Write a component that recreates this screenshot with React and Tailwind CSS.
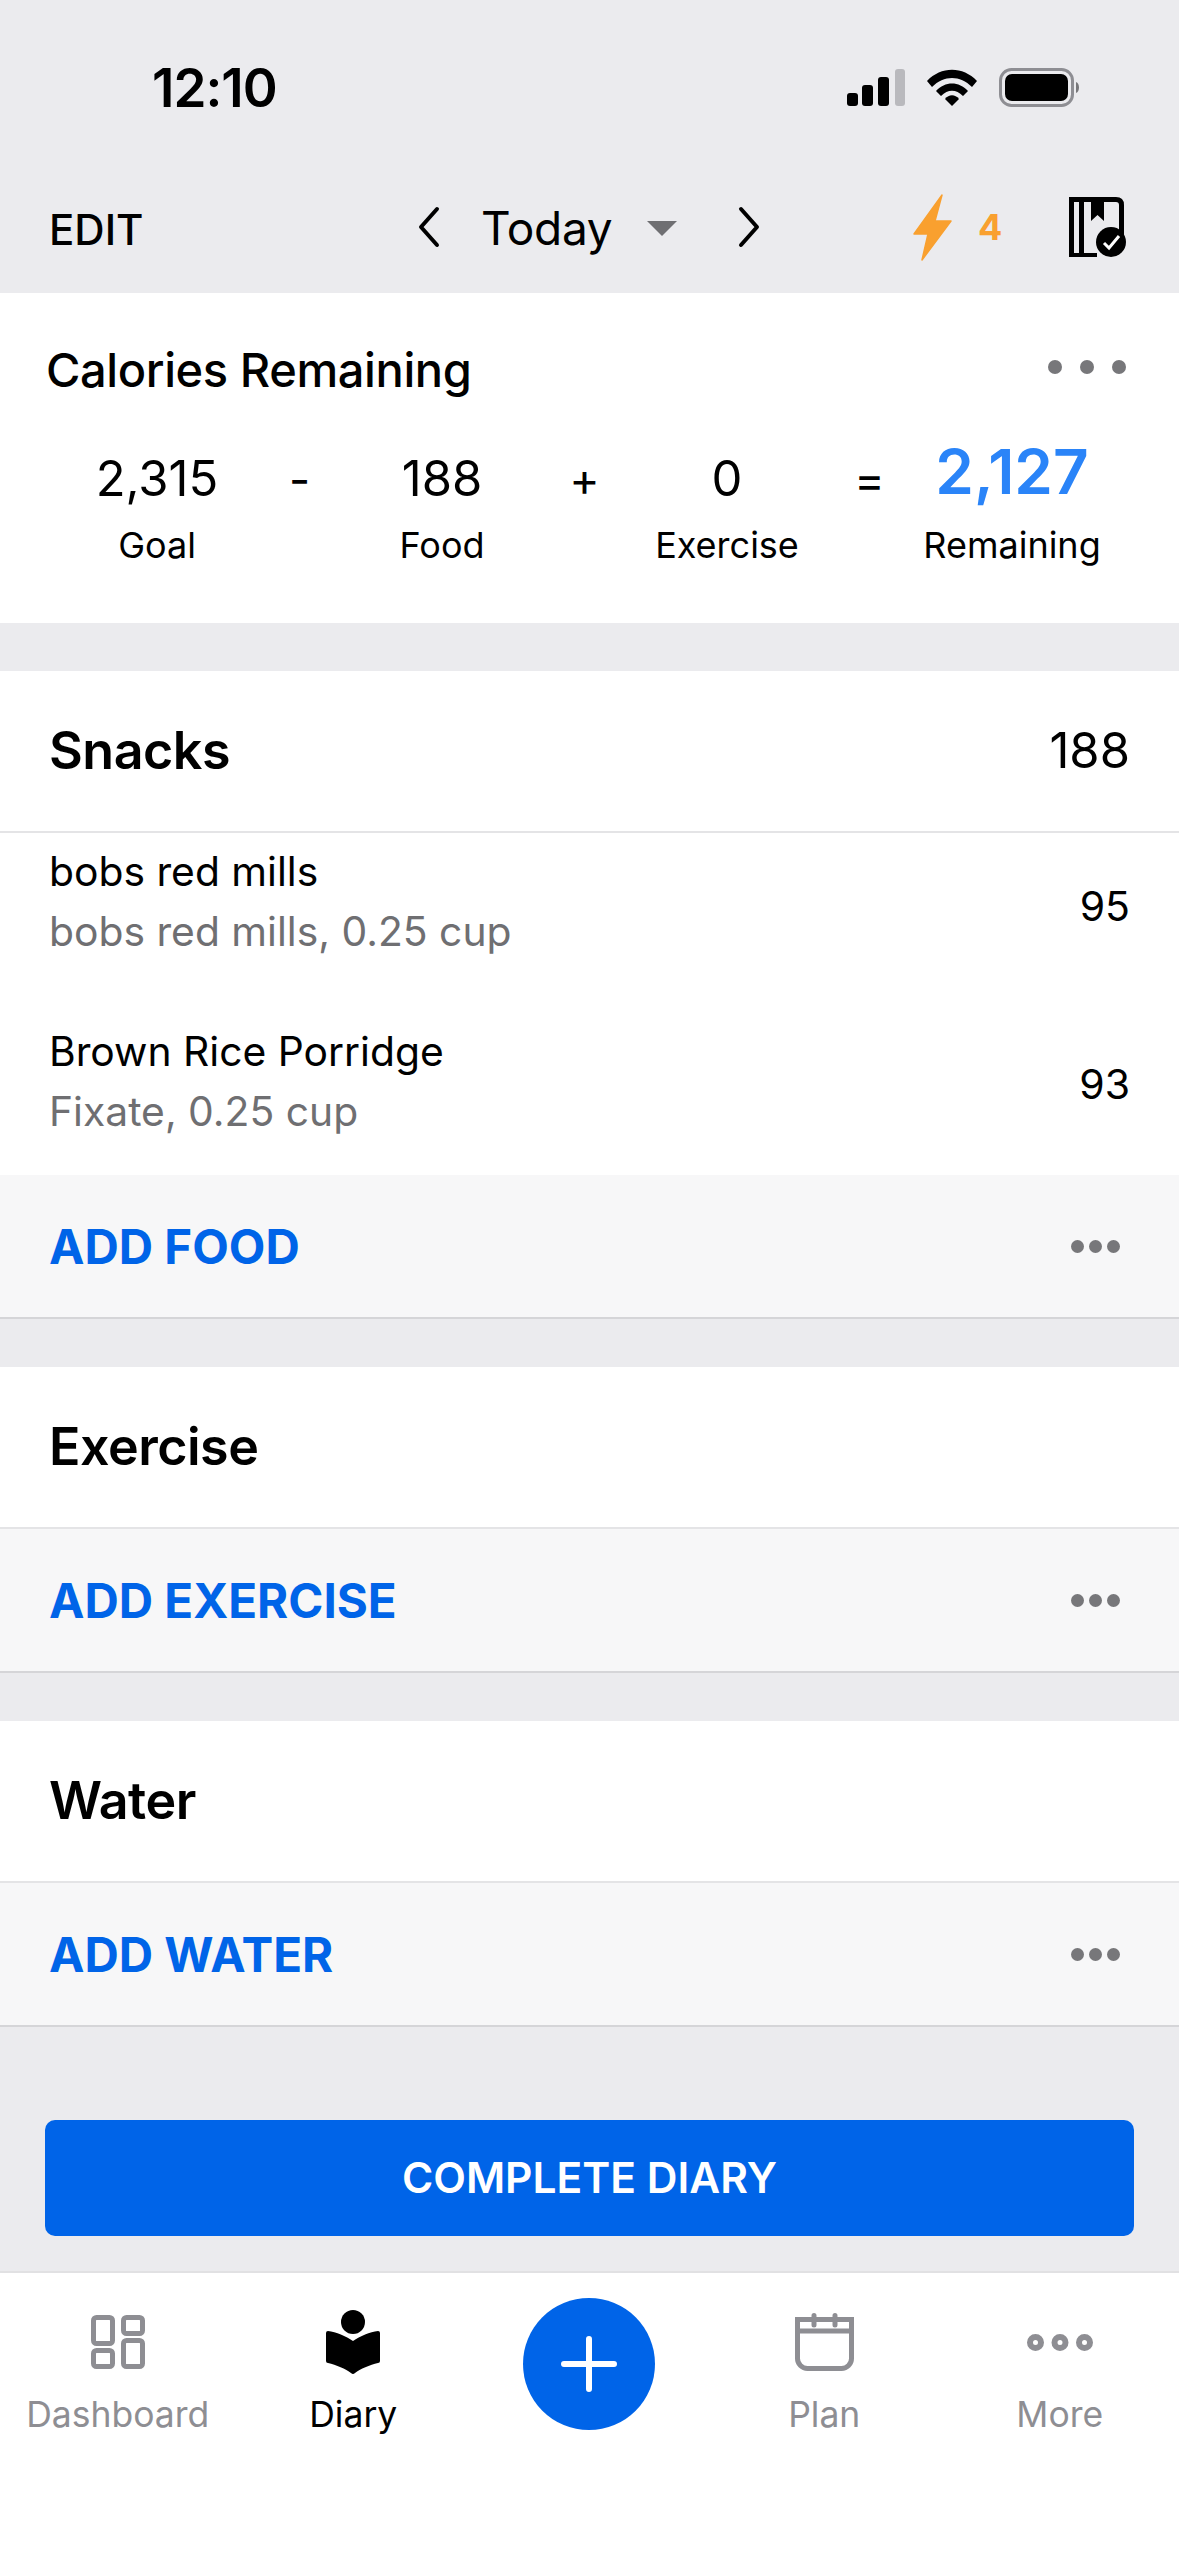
const stats = [
  { value: '2,315', label: 'Goal' },
  { op: '-' },
  { value: '188', label: 'Food' },
  { op: '+' },
  { value: '0', label: 'Exercise' },
  { op: '=' },
  { value: '2,127', label: 'Remaining', big: true },
]

function Dots({ className, dotClassName }) {
  return (
    <div className={'flex items-center ' + className}>
      <span className={'rounded-full bg-[#77777a] ' + dotClassName} />
      <span className={'rounded-full bg-[#77777a] ' + dotClassName} />
      <span className={'rounded-full bg-[#77777a] ' + dotClassName} />
    </div>
  )
}

function StatusBar() {
  return (
    <div className="flex h-[170px] items-start justify-between pl-[152px] pr-[98px] pt-[58px]">
      <span className="text-[53px] leading-[60px] font-semibold tracking-[-1px]">12:10</span>
      <div className="flex items-center gap-[22px] pt-[10px]">
        <svg width="58" height="37" viewBox="0 0 58 37">
          <rect x="0" y="24" width="11" height="13" rx="3" fill="#000" />
          <rect x="15" y="16" width="11" height="21" rx="3" fill="#000" />
          <rect x="31" y="8" width="11" height="29" rx="3" fill="#000" />
          <rect x="48" y="0" width="10" height="37" rx="3" fill="#b9b9bd" />
        </svg>
        <svg width="50" height="37" viewBox="0 0 50 37">
          <path d="M0 12C14 -3 36 -3 50 12L45 18C33 6 17 6 5 18Z" fill="#000" />
          <path d="M9 22C18 12 32 12 41 22L36 27C29 20 21 20 14 27Z" fill="#000" />
          <path d="M18 30C22 25 28 25 32 30L25 37Z" fill="#000" />
        </svg>
        <svg width="82" height="39" viewBox="0 0 82 39">
          <rect x="1.5" y="1.5" width="72" height="36" rx="11" fill="none" stroke="#8e8e93" strokeWidth="3" />
          <rect x="6" y="6" width="63" height="27" rx="7" fill="#000" />
          <path d="M77 14C81 15 81 24 77 25Z" fill="#77777a" />
        </svg>
      </div>
    </div>
  )
}

function NavBar() {
  return (
    <div className="flex h-[123px] items-center pb-[9px] pl-[49px]">
      <span className="mt-[6px] w-[368px] text-[42px] leading-[46px] font-medium">EDIT</span>
      <svg width="23" height="42" viewBox="0 0 23 42" fill="none" stroke="#000" strokeWidth="4" strokeLinecap="round" strokeLinejoin="round">
        <path d="M20 3L4 21L20 39" />
      </svg>
      <span className="ml-[41px] mt-[2px] w-[166px] text-[46px] leading-[56px] font-normal tracking-[-0.3px]">Today</span>
      <span className="mt-[2px] h-0 w-0 border-x-[15px] border-t-[15px] border-x-transparent border-t-[#6f6f72]" />
      <svg width="23" height="42" viewBox="0 0 23 42" fill="none" stroke="#000" strokeWidth="4" strokeLinecap="round" strokeLinejoin="round" className="ml-[61px]">
        <path d="M3 3L19 21L3 39" />
      </svg>
      <svg width="40" height="67" viewBox="0 0 40 67" className="ml-[152px]">
        <path d="M29 1L22 27H38L9 66L15 40H1Z" fill="#f9a02f" stroke="#f9a02f" strokeWidth="1.5" strokeLinejoin="round" />
      </svg>
      <span className="ml-[25px] w-[21px] text-[36px] leading-[40px] font-bold text-[#f9a02f]">4</span>
      <svg width="58" height="60" viewBox="0 0 58 60" className="ml-[70px]">
        <path
          d="M0 0H47Q55 0 55 8V45H28V60H0ZM5 5H10V56H5ZM15 5H22V24L28.5 18L35 24V5H47Q50 5 50 8V45H28V56H15Z"
          fill="#000"
          fillRule="evenodd"
        />
        <circle cx="42" cy="45" r="15" fill="#000" />
        <path d="M35 46L40 51L50 39" fill="none" stroke="#fff" strokeWidth="3" />
      </svg>
    </div>
  )
}

function CaloriesCard() {
  return (
    <section className="h-[330px] bg-white px-[46px]">
      <div className="flex items-center justify-between pt-[49px]">
        <h2 className="text-[47px] leading-[56px] font-medium tracking-[-0.4px] text-black">Calories Remaining</h2>
        <Dots className="mb-[6px] gap-[18px] pr-[7px]" dotClassName="h-[14px] w-[14px]" />
      </div>
      <div className="-ml-[10px] mt-[43px] flex items-start">
        {stats.map((s, i) =>
          s.op ? (
            <span key={i} className="w-[43px] shrink-0 pt-[10px] text-center text-[46px] leading-[56px]">{s.op}</span>
          ) : (
            <div key={i} className="flex w-[242px] shrink-0 flex-col items-center">
              <span
                className={
                  s.big
                    ? 'h-[82px] text-[62px] leading-[62px] font-semibold text-[#2a84f8]'
                    : 'h-[82px] pt-[10px] text-[49px] leading-[56px] text-black'
                }
              >
                {s.value}
              </span>
              <span className="text-[36px] leading-[44px] text-black">{s.label}</span>
            </div>
          ),
        )}
      </div>
    </section>
  )
}

function AddRow({ label }) {
  return (
    <div className="flex h-[144px] items-center justify-between border-b-2 border-[#d5d5d8] bg-[#f7f7f8] pl-[49px] pr-[59px]">
      <span className="pt-[2px] text-[47.5px] font-bold text-[#0064e8]">{label}</span>
      <Dots className="gap-[5px]" dotClassName="h-[13px] w-[13px]" />
    </div>
  )
}

function Title({ children, right }) {
  return (
    <div className="flex h-[162px] items-center justify-between border-b-2 border-[#e4e4e6] bg-white px-[49px]">
      <span className="text-[52px] font-semibold tracking-[-0.5px] text-black">{children}</span>
      {right && <span className="text-[49px] font-normal text-black">{right}</span>}
    </div>
  )
}

function FoodRow({ name, detail, cal, className, textClassName }) {
  return (
    <div className={'flex items-center justify-between bg-white px-[49px] ' + className}>
      <div className={textClassName}>
        <div className="text-[40.8px] leading-[56px] text-black">{name}</div>
        <div className="mt-[4px] text-[40.8px] leading-[56px] text-[#6f6f72]">{detail}</div>
      </div>
      <span className="text-[41px] text-black">{cal}</span>
    </div>
  )
}

function TabItem({ label, active, children }) {
  return (
    <div className="flex w-[235.5px] flex-col items-center">
      <div className="flex h-[106px] items-center justify-center pt-[4px]">{children}</div>
      <span className={'text-[35.5px] leading-[44px] ' + (active ? 'text-black' : 'text-[#8e8e93]')}>{label}</span>
    </div>
  )
}

function TabBar() {
  return (
    <div className="flex h-[285px] items-start border-t-2 border-[#e1e1e3] bg-white pt-[14px]">
      <TabItem label="Dashboard">
        <svg width="54" height="54" viewBox="0 0 54 54" fill="none" stroke="#8e8e93" strokeWidth="5">
          <rect x="2.5" y="2.5" width="19" height="26" rx="3" />
          <rect x="32.5" y="2.5" width="19" height="16" rx="3" />
          <rect x="2.5" y="35.5" width="19" height="16" rx="3" />
          <rect x="32.5" y="25.5" width="19" height="26" rx="3" />
        </svg>
      </TabItem>
      <TabItem label="Diary" active>
        <svg width="54" height="65" viewBox="0 0 54 65" fill="#000">
          <circle cx="27" cy="12" r="12" />
          <path d="M2 21C10 22 20 26 27 31C34 26 44 22 52 21Q54 21 54 23V51Q54 53 52 53C44 55 34 59 29 63Q27 65 25 63C20 59 10 55 2 53Q0 53 0 51V23Q0 21 2 21Z" />
        </svg>
      </TabItem>
      <div className="flex w-[235.5px] justify-center pt-[11px]">
        <div className="flex h-[132px] w-[132px] items-center justify-center rounded-full bg-[#0064e8]">
          <svg width="56" height="56" viewBox="0 0 56 56" stroke="#fff" strokeWidth="6" strokeLinecap="round">
            <path d="M28 3V53M3 28H53" />
          </svg>
        </div>
      </div>
      <TabItem label="Plan">
        <svg width="59" height="58" viewBox="0 0 59 58" fill="none" stroke="#8e8e93" strokeWidth="5">
          <path d="M2.5 6.5H56.5V45.5A10 10 0 0 1 46.5 55.5H12.5A10 10 0 0 1 2.5 45.5Z" />
          <path d="M2.5 18H56.5" />
          <path d="M19 2.5V12M40 2.5V12" strokeLinecap="round" />
        </svg>
      </TabItem>
      <TabItem label="More">
        <svg width="66" height="17" viewBox="0 0 66 17" fill="none" stroke="#8e8e93" strokeWidth="6">
          <circle cx="8.5" cy="8.5" r="5.5" />
          <circle cx="33" cy="8.5" r="5.5" />
          <circle cx="57.5" cy="8.5" r="5.5" />
        </svg>
      </TabItem>
    </div>
  )
}

export default function App() {
  return (
    <div className="flex h-[2556px] w-[1179px] flex-col overflow-hidden bg-[#ebebee] text-black [font-family:Inter,'Liberation_Sans',sans-serif]">
      <StatusBar />
      <NavBar />
      <CaloriesCard />
      <section className="mt-[48px]">
        <Title right="188">Snacks</Title>
        <FoodRow name="bobs red mills" detail="bobs red mills, 0.25 cup" cal="95" className="h-[161px] pb-[14px]" textClassName="mb-[12px]" />
        <FoodRow name="Brown Rice Porridge" detail="Fixate, 0.25 cup" cal="93" className="h-[181px]" textClassName="mb-[8px]" />
        <AddRow label="ADD FOOD" />
      </section>
      <section className="mt-[48px]">
        <Title>Exercise</Title>
        <AddRow label="ADD EXERCISE" />
      </section>
      <section className="mt-[48px]">
        <Title>Water</Title>
        <AddRow label="ADD WATER" />
      </section>
      <div className="flex-1 px-[45px] pt-[93px]">
        <button className="h-[116px] w-full rounded-[10px] bg-[#0064e8] text-[42.5px] font-semibold text-white">COMPLETE DIARY</button>
      </div>
      <TabBar />
    </div>
  )
}
